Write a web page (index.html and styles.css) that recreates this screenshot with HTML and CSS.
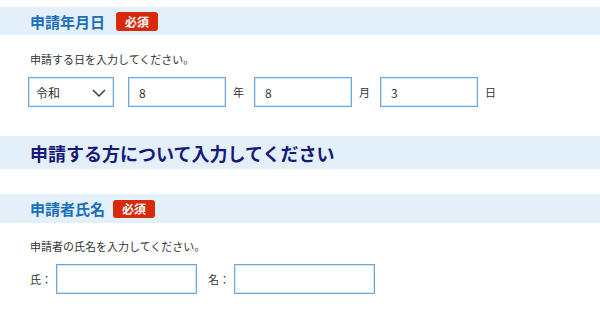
FILE: index.html
```html
<!DOCTYPE html>
<html lang="ja">
<head>
    <meta charset="UTF-8">
    <meta name="viewport" content="width=device-width, initial-scale=1.0">
    <title>申請フォーム</title>
    <link rel="stylesheet" href="styles.css">
</head>
<body>
    <div class="field date-field">
        <h3 class="field-head"><span class="field-title">申請年月日</span><span class="required">必須</span></h3>
        <p class="field-desc">申請する日を入力してください。</p>
        <div class="field-row">
            <div class="select-wrap">
                <select class="era-select">
                    <option>令和</option>
                    <option>平成</option>
                </select>
                <svg class="chevron" width="14" height="8" viewBox="0 0 14 8"><path d="M1 1l6 6 6-6" fill="none" stroke="#333" stroke-width="1.4"/></svg>
            </div>
            <input class="text-input num-input" type="text" value="8">
            <span class="unit">年</span>
            <input class="text-input num-input" type="text" value="8">
            <span class="unit">月</span>
            <input class="text-input num-input" type="text" value="3">
            <span class="unit">日</span>
        </div>
    </div>

    <h2 class="section-head">申請する方について入力してください</h2>

    <div class="field name-field">
        <h3 class="field-head"><span class="field-title">申請者氏名</span><span class="required">必須</span></h3>
        <p class="field-desc">申請者の氏名を入力してください。</p>
        <div class="field-row">
            <label class="name-label">氏：</label>
            <input class="text-input name-input" type="text">
            <label class="name-label second">名：</label>
            <input class="text-input name-input" type="text">
        </div>
    </div>
</body>
</html>
```

FILE: styles.css
```css
body {
    margin: 0;
    font-family: "Noto Sans CJK JP", "Noto Sans", sans-serif;
    color: #333;
    background-color: #fff;
}
.field-head {
    display: flex;
    align-items: center;
    height: 28px;
    margin: 0;
    padding-left: 30px;
    background-color: #e3eff9;
}
.field-title {
    font-size: 15px;
    font-weight: bold;
    color: #1b6fba;
}
.required {
    margin-left: 11px;
    padding: 0 9px;
    height: 19px;
    line-height: 19px;
    font-size: 12px;
    font-weight: bold;
    color: #fff;
    background-color: #d9290b;
    border-radius: 3px;
}
.name-field .required {
    margin-left: 8px;
    height: 18px;
    line-height: 18px;
}
.date-field {
    margin-top: 7px;
}
.name-field {
    margin-top: 25px;
}
.name-field .field-head {
    height: 29px;
}
.field-desc {
    margin: 16px 0 0;
    padding-left: 30px;
    font-size: 11px;
    line-height: 16px;
}
.name-field .field-desc {
    margin-top: 15px;
}
.field-row {
    display: flex;
    align-items: center;
    margin-top: 10px;
    padding-left: 28px;
}
.select-wrap {
    position: relative;
}
.era-select, .text-input {
    box-sizing: border-box;
    height: 30px;
    margin: 0;
    border: 1px solid #6aa7dc;
    box-shadow: inset 0 0 0 1px #d4e6f5;
    border-radius: 0;
    background-color: #fff;
    font-family: inherit;
    font-size: 12px;
    color: #333;
    outline: none;
}
.era-select {
    appearance: none;
    -webkit-appearance: none;
    width: 86px;
    padding: 0 0 0 7px;
}
.chevron {
    position: absolute;
    right: 8px;
    top: 12px;
    pointer-events: none;
}
.num-input {
    width: 98px;
    padding: 0 10px;
}
.date-field .num-input:first-of-type {
    margin-left: 14px;
}
.unit {
    margin: 0 10px 0 7px;
    font-size: 11px;
}
.name-field .field-row {
    padding-left: 30px;
}
.name-label {
    font-size: 11px;
    margin-right: 4px;
}
.name-label.second {
    margin-left: 11px;
}
.name-input {
    width: 141px;
}
.section-head {
    display: flex;
    align-items: center;
    height: 33px;
    margin: 29px 0 0;
    padding-left: 30px;
    font-size: 18px;
    font-weight: bold;
    color: #16197a;
    background-color: #e3eff9;
}
```
